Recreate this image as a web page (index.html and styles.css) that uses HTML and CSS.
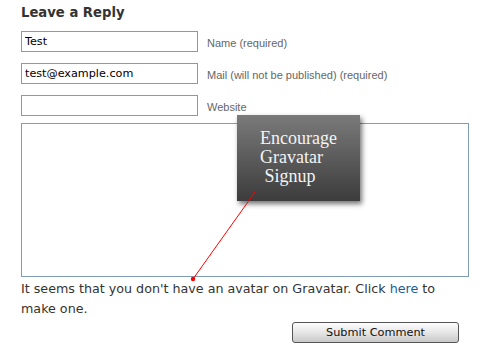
FILE: index.html
```html
<!DOCTYPE html>
<html lang="en">
<head>
    <meta charset="UTF-8">
    <title>Leave a Reply</title>
    <link rel="stylesheet" href="styles.css">
</head>
<body>
    <div class="respond">
        <h3 class="reply-title">Leave a Reply</h3>
        <form class="comment-form">
            <div class="field">
                <input type="text" class="text-input" value="Test">
                <label>Name (required)</label>
            </div>
            <div class="field">
                <input type="text" class="text-input" value="test@example.com">
                <label>Mail (will not be published) (required)</label>
            </div>
            <div class="field">
                <input type="text" class="text-input" value="">
                <label>Website</label>
            </div>
            <div class="comment-area">
                <textarea class="comment-box"></textarea>
                <!-- подсказка поверх поля -->
                <div class="callout">Encourage<br>Gravatar<br>&nbsp;Signup</div>
                <svg class="pointer" width="80" height="100" viewBox="0 0 80 100">
                    <line x1="73" y1="5" x2="11" y2="92" stroke="#f00" stroke-width="1"/>
                    <circle cx="11" cy="92" r="2.2" fill="#f00"/>
                </svg>
            </div>
            <p class="gravatar-note">It seems that you don't have an avatar on Gravatar. Click <a href="#">here</a> to make one.</p>
            <div class="submit-row">
                <button type="button" class="submit-btn">Submit Comment</button>
            </div>
        </form>
    </div>
</body>
</html>
```

FILE: styles.css
```css
body {
    margin: 0;
    padding: 0;
    background: #fff;
    font-family: "DejaVu Sans", Verdana, sans-serif;
    color: #333;
}
.respond {
    padding: 0 21px;
    width: 448px;
}
.reply-title {
    margin: 5px 0 0 0;
    height: 26px;
    font-size: 13.2px;
    font-weight: bold;
    color: #333;
}
.field {
    display: flex;
    align-items: center;
    height: 21px;
    margin-bottom: 11px;
}
.text-input {
    box-sizing: border-box;
    width: 177px;
    height: 21px;
    margin: 0;
    padding: 0 3px;
    border: 1px solid #7f9db9;
    font-family: "DejaVu Sans", Verdana, sans-serif;
    font-size: 11.2px;
    color: #000;
}
.field label {
    margin-left: 9px;
    margin-top: 3px;
    font-family: "Liberation Sans", Arial, sans-serif;
    font-size: 11px;
    color: #666;
}
.comment-area {
    position: relative;
    margin-top: -4px;
    height: 154px;
}
.comment-box {
    box-sizing: border-box;
    display: block;
    width: 448px;
    height: 154px;
    margin: 0;
    border: 1px solid #7f9db9;
    resize: none;
}
.callout {
    position: absolute;
    left: 216px;
    top: -8px;
    width: 123px;
    height: 86px;
    box-sizing: border-box;
    padding: 14px 0 0 23px;
    background: linear-gradient(#7a7a7a, #3c3c3c);
    box-shadow: 2px 3px 5px rgba(0, 0, 0, 0.55);
    font-family: "Liberation Serif", "DejaVu Serif", serif;
    font-size: 18px;
    line-height: 19px;
    color: #f4f4f4;
}
.pointer {
    position: absolute;
    left: 161px;
    top: 64px;
    overflow: visible;
}
.gravatar-note {
    margin: 2px 0 0 0;
    font-size: 12.7px;
    line-height: 20px;
    color: #333;
}
.gravatar-note a {
    color: #1a5c9c;
    text-decoration: none;
}
.submit-row {
    display: flex;
    justify-content: flex-end;
    margin-top: 3px;
    padding-right: 10px;
}
.submit-btn {
    width: 167px;
    height: 21px;
    padding: 0;
    border: 1px solid #555;
    border-radius: 3px;
    background: linear-gradient(#fdfdfd, #e6e6e6 50%, #c9c9c9);
    font-family: "DejaVu Sans", Verdana, sans-serif;
    font-size: 11.3px;
    color: #111;
}
```
